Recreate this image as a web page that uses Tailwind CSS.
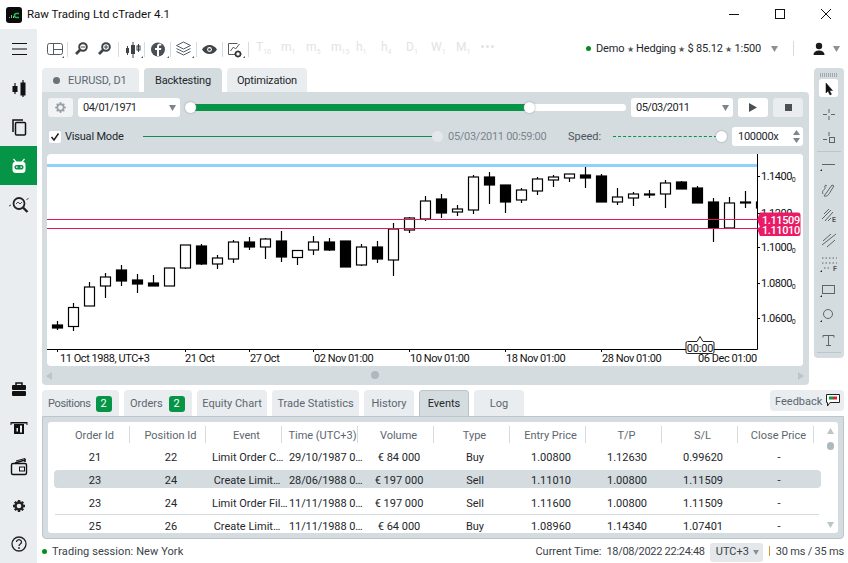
<!DOCTYPE html>
<html lang="en">
<head>
<meta charset="UTF-8">
<title>Raw Trading Ltd cTrader 4.1</title>
<script src="https://cdn.jsdelivr.net/npm/@tailwindcss/browser@4"></script>
</head>
<body class="w-[848px] h-[563px] overflow-hidden bg-white flex flex-col font-['Roboto',sans-serif] text-[11px] text-[#2b2f33]">

<!-- Title bar -->
<div class="h-[29px] flex items-center shrink-0">
  <svg class="ml-[6px] w-[16px] h-[16px]" viewBox="0 0 16 16"><rect width="16" height="16" rx="3" fill="#0b0b0b"/><path d="M3 11h1v-1H3zM5 11h1V8H5zM7 11h1V9H7z" fill="#9aa"/><path d="M13 6.5h-2.5a2 2 0 0 0 0 4H13" fill="none" stroke="#1fc24b" stroke-width="1.6"/></svg>
  <span class="ml-[5px] text-[11.5px] text-[#111]">Raw Trading Ltd cTrader 4.1</span>
  <div class="ml-auto flex items-center">
    <svg class="w-[46px] h-[20px]" viewBox="0 0 46 20"><path d="M16 9.5h10" stroke="#111"/></svg>
    <svg class="w-[46px] h-[20px]" viewBox="0 0 46 20"><rect x="16.500" y="4.500" width="9" height="9" fill="none" stroke="#111"/></svg>
    <svg class="w-[46px] h-[20px] mr-[-3px]" viewBox="0 0 46 20"><path d="M16 4l10 10M26 4L16 14" stroke="#111" fill="none"/></svg>
  </div>
</div>

<div class="flex flex-1 min-h-0">
  <!-- Left sidebar -->
  <div class="w-[37px] bg-[#e9edf0] flex flex-col justify-between shrink-0">
    <div class="flex flex-col">
      <div class="h-[39px] flex items-center justify-center">
        <svg class="w-[24px] h-[24px]" viewBox="0 0 24 24"><path d="M5 6.5h15M5 12h15M5 17.5h15" stroke="#111"/></svg>
      </div>
      <div class="h-[39px] flex items-center justify-center">
        <svg class="w-[24px] h-[24px]" viewBox="0 0 24 24"><path d="M8 7v11M16 4v17" stroke="#111" stroke-width="1.2"/><rect x="5.5" y="10" width="5" height="6" fill="#111"/><rect x="13.5" y="6.5" width="5" height="13" fill="#111"/></svg>
      </div>
      <div class="h-[39px] flex items-center justify-center">
        <svg class="w-[24px] h-[24px]" viewBox="0 0 24 24"><path d="M16 5H6v12" fill="none" stroke="#111" stroke-width="1.5"/><rect x="8.5" y="7.5" width="10" height="12.5" rx="1" fill="none" stroke="#111" stroke-width="1.5"/></svg>
      </div>
      <div class="h-[39px] bg-[#069447] flex items-center justify-center">
        <svg class="w-[24px] h-[24px]" viewBox="0 0 24 24"><path d="M6.500 5l2.500 3M17.500 5L15 8" stroke="#fff" stroke-width="1.2"/><rect x="5.500" y="7.500" width="13" height="11.500" rx="3.500" fill="#fff"/><rect x="7.500" y="11" width="9" height="4.500" rx="2" fill="#069447"/><path d="M9 13.200h1.600M13.400 13.200H15" stroke="#fff" stroke-width="1.2"/></svg>
      </div>
      <div class="h-[39px] flex items-center justify-center">
        <svg class="w-[24px] h-[24px]" viewBox="0 0 24 24"><circle cx="12" cy="10.500" r="5.500" fill="none" stroke="#222" stroke-width="1.800"/><path d="M16 14.500l4.500 4.500" stroke="#222" stroke-width="2.400"/><path d="M2 13l2-1M19.500 7l2-2M9 11l2-2 2 2 2-2" fill="none" stroke="#444" stroke-width="1"/></svg>
      </div>
    </div>
    <div class="flex flex-col">
      <div class="h-[39px] flex items-center justify-center">
        <svg class="w-[24px] h-[24px]" viewBox="0 0 24 24"><path d="M9 8V6h6v2" fill="none" stroke="#111" stroke-width="1.5"/><rect x="5" y="8" width="14" height="5" rx="1" fill="#111"/><rect x="5" y="14" width="14" height="5" rx="1" fill="#111"/></svg>
      </div>
      <div class="h-[39px] flex items-center justify-center">
        <svg class="w-[24px] h-[24px]" viewBox="0 0 24 24"><path d="M3.500 6h17v3h-1V7.500h-15V9h-1z" fill="#111"/><rect x="7" y="8" width="10" height="10" fill="#111"/><rect x="13" y="9.500" width="2" height="7" fill="#e9edf0"/><rect x="9.500" y="12" width="1.500" height="3.500" fill="#e9edf0"/></svg>
      </div>
      <div class="h-[39px] flex items-center justify-center">
        <svg class="w-[24px] h-[24px]" viewBox="0 0 24 24"><path d="M8 8l10-3v2" fill="none" stroke="#111" stroke-width="1.5"/><path d="M9 6l9-2.500v2" fill="none" stroke="#111"/><rect x="4.500" y="8.500" width="15" height="11" rx="1.500" fill="none" stroke="#111" stroke-width="1.400"/><rect x="12.500" y="12" width="5" height="4" fill="none" stroke="#111"/></svg>
      </div>
      <div class="h-[39px] flex items-center justify-center">
        <svg class="w-[24px] h-[24px]" viewBox="0 0 24 24"><circle cx="12" cy="12" r="3.500" fill="none" stroke="#222" stroke-width="2.400"/><path d="M12 6v2M12 16v2M6 12h2M16 12h2M7.800 7.800l1.400 1.400M14.800 14.800l1.400 1.400M16.200 7.800l-1.400 1.400M9.200 14.800l-1.400 1.400" stroke="#222" stroke-width="2.400"/></svg>
      </div>
      <div class="h-[38px] flex items-center justify-center">
        <svg class="w-[24px] h-[24px]" viewBox="0 0 24 24"><circle cx="12" cy="12" r="7" fill="none" stroke="#222" stroke-width="1.300"/><path d="M9.500 10a2.500 2.300 0 1 1 3.800 2c-.9.600-1.300 1-1.300 2" fill="none" stroke="#222" stroke-width="1.300"/><circle cx="12" cy="16" r=".9" fill="#222"/></svg>
      </div>
    </div>
  </div>

  <div class="flex-1 min-w-0 flex flex-col">
    <!-- Top toolbar -->
    <div class="h-[39px] flex items-center relative shrink-0">
      <svg class="w-[211px] h-[39px] ml-[8px] shrink-0" viewBox="45 29 211 39">
        <g fill="none" stroke="#555c61">
          <rect x="47.500" y="43.500" width="15" height="11" rx="2"/><path d="M53.500 44v10M54 49.500h8"/>
        </g>
        <path d="M62 58h2v-2z" fill="#555"/>
        <path d="M67.500 42v15M118.500 42v15M144.500 42v15M170.500 42v15M196.500 42v15M222.500 42v15M248.500 42v15" stroke="#d5dce0"/>
        <g fill="none" stroke="#3d4347">
          <circle cx="83" cy="47" r="3.800" stroke-width="2"/><path d="M80 50l-4 4" stroke-width="2.600"/><path d="M81 47h4" stroke-width="1"/>
          <circle cx="106" cy="47" r="3.800" stroke-width="2"/><path d="M103 50l-4 4" stroke-width="2.600"/><path d="M104 47h4M106 45v4" stroke-width="1"/>
          <path d="M127.500 46v9M133 42v16M138.500 44v8" stroke-width="1"/>
        </g>
        <g fill="#3d4347"><rect x="126" y="48" width="3" height="5"/><rect x="131" y="45" width="4" height="9"/></g>
        <rect x="137" y="46" width="3" height="4" fill="none" stroke="#3d4347"/>
        <path d="M141 58h2v-2z" fill="#555"/>
        <circle cx="158" cy="49.500" r="7" fill="#4a5055"/>
        <path d="M159 56v-6h2l.3-2H159v-1.500c0-.6.300-1 1-1h1.300v-1.800c-2.500-.4-4.300.4-4.300 3V48h-2v2h2v6z" fill="#fff"/>
        <path d="M167 58h2v-2z" fill="#555"/>
        <g fill="none" stroke="#555c61"><path d="M183.500 42l7 3.500-7 3.500-7-3.500zM176.500 48.500l7 3.500 7-3.500M176.500 51.500l7 3.500 7-3.500"/></g>
        <path d="M192 58h2v-2z" fill="#555"/>
        <path d="M202 49.500c2-3 4.500-4.500 7.500-4.500s5.500 1.500 7.500 4.500c-2 3-4.500 4.500-7.500 4.500s-5.500-1.500-7.500-4.500z" fill="#3d4347"/>
        <circle cx="209.500" cy="49.500" r="2.400" fill="#fff"/><circle cx="209.500" cy="49.500" r="1.300" fill="#3d4347"/>
        <g fill="none" stroke="#555c61"><path d="M228.500 43.500h9M228.500 43.500v11h7M230.500 51l3-4 2 2 4-5"/></g>
        <circle cx="238" cy="54" r="2.500" fill="none" stroke="#333" stroke-width="1.600"/><path d="M238 50.500v1.500M238 56v1.500M234.500 54h1.500M240 54h1.500" stroke="#333"/>
        <path d="M243 58h2v-2z" fill="#555"/>
      </svg>
      <div class="flex items-baseline text-[#dfe3e6] text-[12px] -translate-y-[2px]">
        <span class="w-[25px] flex items-baseline"><span>T</span><span class="text-[7px] translate-y-[3px]">10</span></span>
        <span class="w-[25px] flex items-baseline"><span>m</span><span class="text-[7px] translate-y-[3px]">1</span></span>
        <span class="w-[25px] flex items-baseline"><span>m</span><span class="text-[7px] translate-y-[3px]">5</span></span>
        <span class="w-[25px] flex items-baseline"><span>m</span><span class="text-[7px] translate-y-[3px]">15</span></span>
        <span class="w-[25px] flex items-baseline"><span>h</span><span class="text-[7px] translate-y-[3px]">1</span></span>
        <span class="w-[25px] flex items-baseline"><span>h</span><span class="text-[7px] translate-y-[3px]">4</span></span>
        <span class="w-[25px] flex items-baseline"><span>D</span><span class="text-[7px] translate-y-[3px]">1</span></span>
        <span class="w-[25px] flex items-baseline"><span>W</span><span class="text-[7px] translate-y-[3px]">1</span></span>
        <span class="w-[24px] flex items-baseline"><span>M</span><span class="text-[7px] translate-y-[3px]">1</span></span>
        <span class="flex gap-[2px] self-center ml-[1px]"><i class="w-[3px] h-[3px] rounded-full bg-[#dfe3e6]"></i><i class="w-[3px] h-[3px] rounded-full bg-[#dfe3e6]"></i><i class="w-[3px] h-[3px] rounded-full bg-[#dfe3e6]"></i></span>
      </div>
      <div class="ml-auto flex items-center pr-[8px]">
        <i class="w-[5px] h-[5px] rounded-full bg-[#0a8a1e] mr-[5px]"></i>
        <span class="text-[#23272b] pt-[1px] tracking-[-0.2px]">Demo <span class="text-[8px] text-[#555]">★</span> Hedging <span class="text-[8px] text-[#555]">★</span> $ 85.12 <span class="text-[8px] text-[#555]">★</span> 1:500</span>
        <svg class="w-[7px] h-[6px] ml-[10px]" viewBox="0 0 7 6"><path d="M0 0h7L3.500 6z" fill="#8a9196"/></svg>
        <i class="w-px h-[15px] bg-[#d5dce0] ml-[15px]"></i>
        <svg class="w-[14px] h-[14px] ml-[18px]" viewBox="0 0 14 14"><circle cx="7" cy="4" r="3.200" fill="#1a1a1a"/><path d="M1.500 13c0-3 2-4.500 5.500-4.500s5.500 1.500 5.500 4.500z" fill="#1a1a1a"/></svg>
        <svg class="w-[7px] h-[6px] ml-[7px]" viewBox="0 0 7 6"><path d="M0 0h7L3.500 6z" fill="#8a9196"/></svg>
      </div>
    </div>

    <!-- Backtesting area and drawing tools -->
    <div class="flex pl-[5px] gap-[5px] shrink-0">
      <div class="w-[767px]">
        <div class="h-[24px] flex gap-[5px]">
          <div class="w-[97px] bg-[#e9edf0] rounded-t-[4px] flex items-center pl-[11px] pt-[2px] text-[#5c666e]"><i class="w-[7px] h-[7px] rounded-full bg-[#6b7378] mr-[8px] -translate-y-[1px]"></i>EURUSD, D1</div>
          <div class="w-[78px] bg-[#d5dce0] rounded-t-[4px] flex items-center justify-center pt-[3px] tracking-[-0.15px] text-[#23272b]">Backtesting</div>
          <div class="w-[80px] bg-[#e9edf0] rounded-t-[4px] flex items-center justify-center pt-[3px] tracking-[-0.2px] text-[#23272b]">Optimization</div>
        </div>
        <div class="h-[293px] bg-[#d5dce0] rounded-b-[4px] rounded-tr-[4px] pt-[6px]">
          <!-- Range row -->
          <div class="h-[19px] flex items-center pl-[6px]">
            <div class="w-[25px] h-[19px] bg-[#f1f3f5] rounded-[3px] flex items-center justify-center">
              <svg class="w-[13px] h-[13px]" viewBox="0 0 24 24"><circle cx="12" cy="12" r="6" fill="none" stroke="#9aa2a8" stroke-width="3.500"/><path d="M12 2v4M12 18v4M2 12h4M18 12h4M5 5l3 3M16 16l3 3M19 5l-3 3M8 16l-3 3" stroke="#9aa2a8" stroke-width="3"/></svg>
            </div>
            <div class="w-[102px] h-[19px] ml-[5px] pt-[2px] bg-white rounded-[3px] flex items-center justify-between pl-[5px] pr-[4px] tracking-[-0.5px] text-[#23272b]">04/01/1971<svg class="w-[7px] h-[6px] -translate-y-[1px]" viewBox="0 0 7 6"><path d="M0 0h7L3.500 6z" fill="#7d858b"/></svg></div>
            <div class="relative w-[439px] h-[7px] ml-[7px] bg-white rounded-full">
              <div class="absolute left-[3px] top-0 w-[339px] h-[7px] bg-[#069447]"></div>
              <i class="absolute left-[-2px] top-[-2px] w-[11px] h-[11px] rounded-full bg-white shadow-[0_0_2px_#8a9196]"></i>
              <i class="absolute left-[337px] top-[-2px] w-[11px] h-[11px] rounded-full bg-white shadow-[0_0_2px_#8a9196]"></i>
            </div>
            <div class="w-[102px] h-[19px] ml-[5px] pt-[2px] bg-white rounded-[3px] flex items-center justify-between pl-[5px] pr-[4px] tracking-[-0.5px] text-[#23272b]">05/03/2011<svg class="w-[7px] h-[6px] -translate-y-[1px]" viewBox="0 0 7 6"><path d="M0 0h7L3.500 6z" fill="#7d858b"/></svg></div>
            <div class="w-[30px] h-[19px] ml-[5px] bg-white rounded-[3px] flex items-center justify-center"><svg class="w-[8px] h-[9px]" viewBox="0 0 8 9"><path d="M0 0l8 4.500L0 9z" fill="#4a5055"/></svg></div>
            <div class="w-[30px] h-[19px] ml-[5px] bg-[#e9edf0] rounded-[3px] flex items-center justify-center"><i class="w-[7px] h-[7px] bg-[#4a5055]"></i></div>
          </div>
          <!-- Visual mode row -->
          <div class="h-[19px] mt-[10px] flex items-center pl-[7px]">
            <div class="w-[12px] h-[12px] bg-white rounded-[2px] flex items-center justify-center"><svg class="w-[10px] h-[10px]" viewBox="0 0 10 10"><path d="M1.500 5l2.500 3 4.500-6.500" fill="none" stroke="#222" stroke-width="1.500"/></svg></div>
            <span class="ml-[4px] w-[78px] pt-[2px] tracking-[-0.2px] text-[#23272b]">Visual Mode</span>
            <div class="relative w-[294px] h-px bg-[#069447]"><i class="absolute left-[289px] top-[-5px] w-[11px] h-[11px] rounded-full bg-[#e4e8eb]"></i></div>
            <span class="ml-[11px] w-[120px] pt-[2px] tracking-[-0.28px] text-[#7b858c]">05/03/2011 00:59:00</span>
            <span class="w-[45px] pt-[2px] text-[#4c555c]">Speed:</span>
            <div class="relative w-[104px] h-px border-t border-dashed border-[#069447]"><i class="absolute left-[103px] top-[-6px] w-[11px] h-[11px] rounded-full bg-white shadow-[0_0_2px_#8a9196]"></i></div>
            <div class="w-[71px] h-[19px] ml-[15px] bg-white rounded-[3px] flex items-center justify-between pl-[6px] pr-[3px] text-[#23272b]"><span class="pt-[2px] tracking-[-0.3px]">100000x</span>
              <svg class="w-[7px] h-[13px]" viewBox="0 0 7 13"><path d="M0 5l3.500-5L7 5zM0 8l3.500 5L7 8z" fill="#7d858b"/></svg></div>
          </div>
          <!-- Chart -->
          <div class="relative w-[756px] h-[212px] ml-[5px] mt-[8px] bg-white rounded-[4px] overflow-hidden">
            <svg id="chart" class="block w-[756px] h-[212px]" viewBox="47 154 756 212" font-family="Roboto, sans-serif" font-size="11" fill="#111"></svg>
          </div>
          <!-- Chart scroll -->
          <div class="h-[19px] relative flex items-center justify-between pl-[4px] pr-[5px]">
            <svg class="w-[6px] h-[8px]" viewBox="0 0 6 8"><path d="M6 0v8L0 4z" fill="#bcc5ca"/></svg>
            <i class="absolute left-[329px] top-[5px] w-[8px] h-[8px] rounded-full bg-[#aeb8bf]"></i>
            <svg class="w-[6px] h-[8px]" viewBox="0 0 6 8"><path d="M0 0v8l6-4z" fill="#bcc5ca"/></svg>
          </div>
        </div>
      </div>
      <div class="w-[30px] h-[290px] bg-[#d5dce0] rounded-[4px] shrink-0">
        <svg class="block w-[30px] h-[290px]" viewBox="814 68 30 290" fill="none" stroke="#5d656b">
          <path d="M820 74h18" stroke="#6c757b" stroke-dasharray="1 1" stroke-width="1"/><path d="M820 76h18" stroke="#6c757b" stroke-dasharray="1 1" stroke-width="1"/>
          <rect x="819" y="79" width="19" height="18" rx="3" fill="#fff" stroke="none"/>
          <path d="M826 83l0 10 2-2 2 4 1.500-.8-2-3.700h3z" fill="#111" stroke="#111" stroke-width=".5"/>
          <path d="M829 109v4M829 116v4M823 114.500h4M831 114.500h4"/>
          <path d="M829 132v4M823 139.500h4"/><rect x="829.500" y="137.500" width="5" height="5"/>
          <path d="M817 151.500h24M817 352.500h24" stroke="#bcc5ca"/>
          <path d="M822 164.500h13"/><path d="M820 171h2v-2z" fill="#222" stroke="none"/>
          <path d="M823 194c-2-4 3-4 2-7-1-2 1-2 2-1M824 196c4 1 5-2 8-7l2-3-2-1-5 7z"/>
          <path d="M822 219l9-9M825 221l8-9M824 214l5-5M828 221l3-3" /><text x="832" y="222" font-size="7" font-weight="bold" fill="#555" stroke="none" font-family="Roboto, sans-serif">E</text>
          <path d="M822 245l14-11M823 241l8-7M827 247l8-7"/>
          <path d="M822 258h15M822 263h15" stroke-dasharray="1.500 2"/><path d="M824 268h7" stroke-dasharray="1.500 2"/><text x="833" y="271" font-size="7" font-weight="bold" fill="#555" stroke="none" font-family="Roboto, sans-serif">F</text><path d="M820 272h2v-2z" fill="#222" stroke="none"/>
          <rect x="822.500" y="285.500" width="12" height="8"/><path d="M820 297h2v-2z" fill="#222" stroke="none"/>
          <circle cx="828" cy="314" r="4.500"/><path d="M820 322h2v-2z" fill="#222" stroke="none"/>
          <path d="M823 335.500h11M828.500 335.500v10M826 345.500h5M823 335.500v2M834 335.500v2"/>
        </svg>
      </div>
    </div>

    <!-- Bottom panel -->
    <div class="pl-[5px] pr-[4px] mt-[5px] shrink-0">
      <div class="h-[26px] flex gap-[5px] text-[#5c666e]">
        <div class="w-[77px] bg-[#e9edf0] rounded-t-[4px] flex items-center pl-[6px] pt-[2px] gap-[5px]"><span class="tracking-[-0.35px]">Positions</span><span class="w-[16px] h-[16px] rounded-[3px] bg-[#069447] text-white flex items-center justify-center">2</span></div>
        <div class="w-[68px] bg-[#e9edf0] rounded-t-[4px] flex items-center pl-[6px] pt-[2px] gap-[6px]">Orders<span class="w-[16px] h-[16px] rounded-[3px] bg-[#069447] text-white flex items-center justify-center">2</span></div>
        <div class="w-[70px] bg-[#e9edf0] rounded-t-[4px] flex items-center justify-center pt-[2px]">Equity Chart</div>
        <div class="w-[87px] bg-[#e9edf0] rounded-t-[4px] flex items-center justify-center pt-[2px]">Trade Statistics</div>
        <div class="w-[50px] bg-[#e9edf0] rounded-t-[4px] flex items-center justify-center pt-[2px]">History</div>
        <div class="w-[50px] bg-[#d5dce0] rounded-t-[4px] border-t border-x border-[#bcc5ca] flex items-center justify-center pt-[2px] text-[#23272b]">Events</div>
        <div class="w-[50px] bg-[#e9edf0] rounded-t-[4px] flex items-center justify-center pt-[2px]">Log</div>
        <div class="ml-auto w-[74px] h-[21px] bg-[#e9edf0] rounded-[4px] flex items-center pl-[5px] gap-[4px]"><span class="pt-[3px]">Feedback</span>
          <svg class="w-[14px] h-[13px]" viewBox="0 0 14 13"><path d="M.5.500h13v8H4L1.500 12V8.500h-1z" fill="#fff" stroke="#222"/><rect x="3" y="2.500" width="4" height="3" fill="#0a9a3c"/><rect x="7" y="2.500" width="4" height="3" fill="#e0202a"/></svg>
        </div>
      </div>
      <div class="h-[123px] bg-[#d5dce0] border border-[#bcc5ca] rounded-b-[4px] p-[5px]">
        <div class="relative h-[111px] bg-white rounded-[3px] overflow-hidden pl-[6px] text-[#23272b]">
          <div class="grid grid-cols-[repeat(10,76px)] h-[25px] pb-[1px] items-center text-center text-[#5c666e]">
            <div class="pl-[6px] h-[17px] leading-[19px] border-r border-[#d5dce0]">Order Id</div>
            <div class="pl-[6px] h-[17px] leading-[19px] border-r border-[#d5dce0]">Position Id</div>
            <div class="pl-[6px] h-[17px] leading-[19px] border-r border-[#d5dce0]">Event</div>
            <div class="pl-[6px] h-[17px] leading-[19px] border-r border-[#d5dce0]">Time (UTC+3)</div>
            <div class="pl-[6px] h-[17px] leading-[19px] border-r border-[#d5dce0]">Volume</div>
            <div class="pl-[6px] h-[17px] leading-[19px] border-r border-[#d5dce0]">Type</div>
            <div class="pl-[6px] h-[17px] leading-[19px] border-r border-[#d5dce0]">Entry Price</div>
            <div class="pl-[6px] h-[17px] leading-[19px] border-r border-[#d5dce0]">T/P</div>
            <div class="pl-[6px] h-[17px] leading-[19px] border-r border-[#d5dce0]">S/L</div>
            <div class="pl-[6px] h-[17px] leading-[19px] border-r border-[#d5dce0]">Close Price</div>
          </div>
          <div class="w-[767px] grid grid-cols-[repeat(10,76px)] h-[18px] pt-[3px] items-center text-center rounded-[4px]">
            <div class="pl-[6px]">21</div><div class="pl-[6px]">22</div><div class="pl-[6px] whitespace-nowrap">Limit Order C…</div><div class="pl-[7px] whitespace-nowrap tracking-[-0.1px]">29/10/1987 0…</div><div class="pl-[6px]">€ 84 000</div><div class="pl-[6px]">Buy</div><div class="pl-[6px]">1.00800</div><div class="pl-[6px]">1.12630</div><div class="pl-[6px]">0.99620</div><div class="pl-[6px]">-</div>
          </div>
          <div class="w-[767px] mt-[5px] bg-[#d5dce0] grid grid-cols-[repeat(10,76px)] h-[18px] pt-[3px] items-center text-center rounded-[4px]">
            <div class="pl-[6px]">23</div><div class="pl-[6px]">24</div><div class="pl-[6px] whitespace-nowrap">Create Limit…</div><div class="pl-[7px] whitespace-nowrap tracking-[-0.1px]">28/06/1988 0…</div><div class="pl-[6px]">€ 197 000</div><div class="pl-[6px]">Sell</div><div class="pl-[6px]">1.11010</div><div class="pl-[6px]">1.00800</div><div class="pl-[6px]">1.11509</div><div class="pl-[6px]">-</div>
          </div>
          <div class="w-[767px] mt-[5px] grid grid-cols-[repeat(10,76px)] h-[18px] pt-[3px] items-center text-center rounded-[4px]">
            <div class="pl-[6px]">23</div><div class="pl-[6px]">24</div><div class="pl-[6px] whitespace-nowrap">Limit Order Fil…</div><div class="pl-[7px] whitespace-nowrap tracking-[-0.1px]">11/11/1988 0…</div><div class="pl-[6px]">€ 197 000</div><div class="pl-[6px]">Sell</div><div class="pl-[6px]">1.11600</div><div class="pl-[6px]">1.00800</div><div class="pl-[6px]">1.11509</div><div class="pl-[6px]">-</div>
          </div>
          <div class="ml-px w-[764px] h-px mt-[3px] mb-px bg-[#d5dce0]"></div>
          <div class="w-[767px] grid grid-cols-[repeat(10,76px)] h-[18px] pt-[3px] items-center text-center rounded-[4px]">
            <div class="pl-[6px]">25</div><div class="pl-[6px]">26</div><div class="pl-[6px] whitespace-nowrap">Create Limit…</div><div class="pl-[7px] whitespace-nowrap tracking-[-0.1px]">11/11/1988 0…</div><div class="pl-[6px]">€ 64 000</div><div class="pl-[6px]">Buy</div><div class="pl-[6px]">1.08960</div><div class="pl-[6px]">1.14340</div><div class="pl-[6px]">1.07401</div><div class="pl-[6px]">-</div>
          </div>
          <!-- Table scrollbar -->
          <svg class="absolute right-[4px] top-[6px] w-[7px] h-[6px]" viewBox="0 0 7 6"><path d="M0 6h7L3.500 0z" fill="#bcc5ca"/></svg>
          <i class="absolute right-[4px] top-[20px] w-[7px] h-[8px] rounded-full bg-[#aeb8bf]"></i>
          <svg class="absolute right-[4px] top-[100px] w-[7px] h-[6px]" viewBox="0 0 7 6"><path d="M0 0h7L3.500 6z" fill="#bcc5ca"/></svg>
        </div>
      </div>
    </div>

    <!-- Status bar -->
    <div class="flex-1 flex items-center pl-[5px] pr-[4px] text-[#3b4248]">
      <i class="w-[5px] h-[5px] rounded-full bg-[#0a8a1e] mr-[5px]"></i>
      <span class="pt-[2px] tracking-[0.08px]">Trading session: New York</span>
      <span class="ml-auto pt-[2px]">Current Time:</span>
      <span class="ml-[5px] pt-[2px] tracking-[-0.28px]">18/08/2022 22:24:48</span>
      <div class="w-[53px] h-[19px] ml-[5px] mt-[2px] bg-[#e4e8eb] rounded-[3px] flex items-center justify-between pl-[6px] pr-[4px]">UTC+3<svg class="w-[6px] h-[5px]" viewBox="0 0 7 6"><path d="M0 0h7L3.500 6z" fill="#8a9196"/></svg></div>
      <i class="w-px h-[10px] bg-[#d99a2b] ml-[6px] mr-[6px]"></i>
      <span class="pt-[2px] tracking-[-0.2px]">30 ms / 35 ms</span>
    </div>
  </div>
</div>

<script>
// x = 57.5 + 16 * i; [wickTop, wickBottom, bodyTop, bodyBottom, black]
const candles = [
  [321,330,325,328,1],[303,331,307.5,326.5,0],[282,306,287,306,0],[273,298,277,286,0],[265,286,270,281,1],
  [274,293,280,284,1],[275,286,283,286,1],[268,286,268,286,0],[245,269,245,268,0],[244,265,246,264,1],
  [255,269,258,264,0],[240,263,242,259,0],[237,250,242,247,1],[238,259,239,247,0],[231,262,241,257,1],
  [250,265,250.5,257.5,0],[236,255,242,250,0],[238,251,242,250,1],[241,267,241,267,1],[244,266,247,265,0],
  [241,263,247,259,1],[223,276,229,260,0],[217,233,218,230,0],[196,221,201,219,0],[194,218,199,213,1],
  [205,216,209,212,0],[175,214,177,210,0],[172,204,177,185,1],[185,213,185,202,1],[188,203,190,200,0],
  [177,195,179,191,0],[175,187,177,180,0],[174,182,174,178,0],[167,188,175,178,1],[174,202,176,202,1],
  [188,205,197,202,0],[192,206,194,198,0],[190,198,194,195,0],[180,208,183,194,0],[181,189,182,189,1],
  [186,203,188,203,1],[198,242,202,228,1],[197,228,203,228,0],[191,208,202,203,0],[186,208,202,208,1]
];
let s = '';
s += '<rect x="47" y="164" width="710" height="3" fill="#8ed1fc"/>';
candles.forEach((c, i) => {
  const x = 57.5 + 16 * i;
  s += `<path d="M${x} ${c[0]}V${c[1]}" stroke="#000" stroke-width="1.2"/>`;
  s += `<rect x="${x - 5}" y="${c[2]}" width="10" height="${c[3] - c[2]}" fill="${c[4] ? '#000' : '#fff'}" stroke="#000" stroke-width="1.2"/>`;
});
s += '<rect x="758" y="154" width="45" height="212" fill="#fff"/>';
s += '<path d="M47 219.5H757M47 228.5H757" stroke="#e0185f"/>';
s += '<path d="M757.5 154V349.5H47" fill="none" stroke="#000"/>';
[176, 213, 247, 283, 318].forEach(y => { s += `<path d="M757 ${y + .5}h3" stroke="#000"/>`; });
[[176, '1.1400'], [213, '1.1200'], [247, '1.1000'], [283, '1.0800'], [318, '1.0600']].forEach(p => {
  s += `<text x="761" y="${p[0] + 4}" letter-spacing="-0.5">${p[1]}<tspan font-size="7" dy="1.5">0</tspan></text>`;
});
[57.5, 185.5, 249.5, 313.5, 409.5, 505.5, 601.5].forEach(x => { s += `<path d="M${x} 349v3" stroke="#000"/>`; });
[[60, '11 Oct 1988, UTC+3'], [185, '21 Oct'], [250, '27 Oct'], [314, '02 Nov 01:00'], [410, '10 Nov 01:00'], [506, '18 Nov 01:00'], [602, '28 Nov 01:00'], [698, '06 Dec 01:00']].forEach(d => {
  s += `<text x="${d[0]}" y="362" letter-spacing="-0.45">${d[1]}</text>`;
});
s += '<path d="M760 212.5h38a2.5 2.5 0 0 1 2.5 2.5v18.5a2.5 2.5 0 0 1-2.5 2.5h-38l-3-7.5 3-1.5-3-7.5z" fill="#ea1a66"/>';
s += '<g fill="#fff" font-weight="500" font-size="11" letter-spacing="-0.4"><text x="762" y="224">1.11509</text><text x="762" y="233.5">1.11010</text></g>';
s += '<path d="M687.5 341.5h9.5l3-5 3 5h9.5a1.5 1.5 0 0 1 1.5 1.5v9a1.5 1.5 0 0 1-1.5 1.5h-25a1.5 1.5 0 0 1-1.5-1.5v-9a1.5 1.5 0 0 1 1.5-1.5z" fill="#fff" stroke="#222"/>';
s += '<text x="700" y="351.5" text-anchor="middle" letter-spacing="-0.2">00:00</text>';
document.getElementById('chart').innerHTML = s;
</script>
</body>
</html>
